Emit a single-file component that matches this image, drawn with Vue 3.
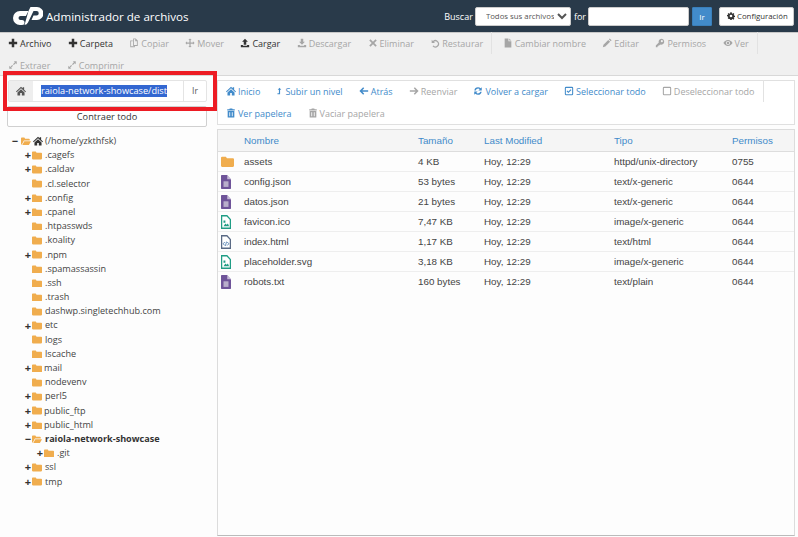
<template>
  <div class="page">
    <header class="top-bar">
      <div class="brand">
        <svg class="logo" viewBox="0 0 30 18">
          <path d="M7 4h8.500l-2.600 5H7.500a2 2 0 0 0 0 4H9a2.500 2.500 0 0 1 0 5H7a7 7 0 0 1 0-14z" />
          <path d="M15.500 4l2-4H24a6.500 6.500 0 0 1 0 13h-5.500l2-4.500h3a2.250 2.250 0 0 0 0-4.500h-3l-5.500 11.500a4 4 0 0 1-3.500 2.500z" />
        </svg>
        <span class="app-title">Administrador de archivos</span>
      </div>
      <div class="search">
        <label>Buscar</label>
        <select class="scope">
          <option>Todos sus archivos</option>
        </select>
        <label>for</label>
        <input class="search-input" type="text" />
        <button class="go">Ir</button>
        <button class="settings">
          <svg class="ico" viewBox="0 0 24 24"><path fill-rule="evenodd" :d="icons.gear" /></svg>
          Configuración
        </button>
      </div>
    </header>

    <!-- barra de acciones -->
    <div class="toolbar">
      <div v-for="(row, i) in actionRows" :key="i" class="tool-row">
        <span v-for="a in row" :key="a.label" class="action" :class="{ off: a.off, sep: a.sep }">
          <svg class="ico" viewBox="0 0 24 24"><path fill-rule="evenodd" :d="icons[a.icon]" /></svg>{{ a.label }}
        </span>
      </div>
    </div>

    <div class="main">
      <aside class="sidebar">
        <div class="path-bar">
          <span class="path-home"><svg class="ico" viewBox="0 0 24 24"><path :d="icons.home" /></svg></span>
          <div class="path-input"><span class="selected">raiola-network-showcase/dist</span></div>
          <span class="path-go">Ir</span>
        </div>
        <div class="red-box"></div>
        <button class="collapse">Contraer todo</button>

        <ul class="tree">
          <li class="root">
            <span class="toggle">−</span>
            <svg class="folder open" viewBox="0 0 24 20"><path :d="icons.folderOpen" /></svg>
            <svg class="ico house" viewBox="0 0 24 24"><path :d="icons.home" /></svg>
            <span>(/home/yzkthfsk)</span>
          </li>
          <li v-for="d in tree" :key="d.name" :class="{ nested: d.nested, current: d.current }">
            <span class="toggle">{{ d.mark }}</span>
            <svg class="folder" viewBox="0 0 24 20"><path :d="d.current ? icons.folderOpen : icons.folder" /></svg>
            <span class="name" :class="{ tight: d.tight }">{{ d.name }}</span>
          </li>
        </ul>
      </aside>

      <section class="content">
        <nav class="nav-box">
          <div v-for="(row, i) in navRows" :key="i" class="tool-row">
            <span v-for="n in row" :key="n.label" class="nav-item" :class="{ off: n.off, sep: n.sep }">
              <svg class="ico" :class="{ narrow: n.icon === 'levelUp' }" viewBox="0 0 24 24"><path fill-rule="evenodd" :d="icons[n.icon]" /></svg>{{ n.label }}
            </span>
          </div>
        </nav>

        <div class="table-box">
          <table class="files">
            <colgroup>
              <col class="c-icon" />
              <col class="c-name" />
              <col class="c-size" />
              <col class="c-date" />
              <col class="c-type" />
              <col />
            </colgroup>
            <thead>
              <tr>
                <th></th>
                <th>Nombre</th>
                <th>Tamaño</th>
                <th>Last Modified</th>
                <th>Tipo</th>
                <th>Permisos</th>
              </tr>
            </thead>
            <tbody>
              <tr v-for="f in files" :key="f.name">
                <td class="icon-cell">
                  <svg v-if="f.kind === 'dir'" class="file-ico dir" viewBox="0 0 24 20"><path :d="icons.folder" /></svg>
                  <svg v-else-if="f.kind === 'text'" class="file-ico text" viewBox="0 0 16 20" preserveAspectRatio="none">
                    <path d="M1 0h9l6 6v13a1 1 0 0 1-1 1H1a1 1 0 0 1-1-1V1a1 1 0 0 1 1-1z" />
                    <path class="corner" d="M10 0v6h6" />
                    <rect class="inner" x="4" y="9" width="8" height="8" />
                  </svg>
                  <svg v-else-if="f.kind === 'image'" class="file-ico image" viewBox="0 0 16 20" preserveAspectRatio="none">
                    <path class="outline" d="M1 1h8.500L15 6.500V19H1z" />
                    <path class="fillin" d="M4 8h3v3H4z M4 16l3-4 2 2 2-2 2 4z" />
                  </svg>
                  <svg v-else class="file-ico html" viewBox="0 0 16 20" preserveAspectRatio="none">
                    <path class="outline" d="M1 1h8.500L15 6.500V19H1z" />
                    <path class="code" d="M6 10l-2.500 2.500L6 15 M10 10l2.500 2.500L10 15 M8.800 9.500l-1.600 6" />
                  </svg>
                </td>
                <td>{{ f.name }}</td>
                <td>{{ f.size }}</td>
                <td>Hoy, 12:29</td>
                <td>{{ f.type }}</td>
                <td>{{ f.perm }}</td>
              </tr>
            </tbody>
          </table>
        </div>
      </section>
    </div>
  </div>
</template>

<script setup>
const icons = {
  plus: 'M9 2h6v7h7v6h-7v7H9v-7H2V9h7z',
  copy: 'M10 1h6l5 5v13H10z M12 3v14h7V8h-4V3z M3 6h6v2H5v12h7v-1h2v3H3z',
  move: 'M12 1l4 4h-2.500v5.500H19V8l4 4-4 4v-2.500h-5.500V19H16l-4 4-4-4h2.500v-5.500H5V16l-4-4 4-4v2.500h5.500V5H8z',
  upload: 'M12 2l7 7h-4v7H9V9H5z M2 17h5v1.500h10V17h5v5H2z',
  download: 'M9 2h6v7h4l-7 7-7-7h4z M2 17h5v1.500h10V17h5v5H2z',
  times: 'M6 3l6 6 6-6 3 3-6 6 6 6-3 3-6-6-6 6-3-3 6-6-6-6z',
  undo: 'M4 4l3 3a9 9 0 1 1-1 13l2.400-2a6 6 0 1 0 .7-8.800L12 12H4z',
  file: 'M4 1h9v7h7v15H4z M15 1l5 5h-5z',
  pencil: 'M2 22l1.500-6L15 4.500l4.500 4.500L8 20.500z M16.500 3l2-2L23 5.500l-2 2z',
  key: 'M15 2a7 7 0 1 1-2.500 13.500L10 18H8v2H6v2H2v-4l7-7A7 7 0 0 1 15 2z M16.500 5a2.500 2.500 0 1 0 0 5 2.500 2.500 0 0 0 0-5z',
  eye: 'M12 5c5 0 9 3.500 11 7-2 3.500-6 7-11 7S3 15.500 1 12c2-3.500 6-7 11-7z M12 7a5 5 0 1 0 0 10 5 5 0 0 0 0-10z M12 9a3 3 0 1 1 0 6 3 3 0 0 1 0-6z',
  expand: 'M14 3h7v7l-2.500-2.500L14 12l-2-2 4.500-4.500z M3 21v-7l2.500 2.500L10 12l2 2-4.500 4.500L10 21z',
  home: 'M12 2l4 3.600V3h3.500v5.800L24 13l-1.600 1.800L12 5.500 1.600 14.800 0 13z M12 8l8.500 7.500V23H14v-6h-4v6H3.500v-7.500z',
  levelUp: 'M12 1l6 7h-4v15H5v-3h5V8H6z',
  left: 'M10 3l2.500 2.500L8 10h14v4H8l4.500 4.500L10 21l-9-9z',
  right: 'M14 3l9 9-9 9-2.500-2.500L16 14H2v-4h14l-4.500-4.500z',
  refresh: 'M12 3a9 9 0 0 1 6.400 2.600L21 3v8h-8l3-3a5.500 5.500 0 0 0-9.300 2.500H3.200A9 9 0 0 1 12 3z M12 21a9 9 0 0 1-6.400-2.600L3 21v-8h8l-3 3a5.500 5.500 0 0 0 9.300-2.500h3.500A9 9 0 0 1 12 21z',
  check: 'M5 2h14a3 3 0 0 1 3 3v14a3 3 0 0 1-3 3H5a3 3 0 0 1-3-3V5a3 3 0 0 1 3-3z M5 4.500a.5.5 0 0 0-.5.500v14a.5.5 0 0 0 .5.500h14a.5.5 0 0 0 .5-.500V5a.5.5 0 0 0-.5-.500z M10.500 17L6 12.500 8 10.500l2.500 2.500L16 7.500l2 2z',
  square: 'M5 2h14a3 3 0 0 1 3 3v14a3 3 0 0 1-3 3H5a3 3 0 0 1-3-3V5a3 3 0 0 1 3-3z M5 4.500a.5.5 0 0 0-.5.500v14a.5.5 0 0 0 .5.500h14a.5.5 0 0 0 .5-.500V5a.5.5 0 0 0-.5-.500z',
  trash: 'M9 1h6l1 2h5v3H3V3h5z M4 7h16v15a1 1 0 0 1-1 1H5a1 1 0 0 1-1-1z M8 10v10h2V10z M14 10v10h2V10z',
  gear: 'M10 1h4l.6 3 2 .9L19.300 3l2.800 2.800-1.900 2.600.9 2.100 3 .5v4l-3 .5-.9 2.100 1.900 2.600-2.800 2.800-2.700-1.900-2 .9-.6 3h-4l-.6-3-2-.9L4.700 21 1.900 18.200l1.900-2.600-.9-2.100-3-.5v-4l3-.5.9-2.100L1.900 5.800 4.700 3l2.700 1.900 2-.9z M12 8a4 4 0 1 0 0 8 4 4 0 0 0 0-8z',
  folder: 'M2 1h7l2 3h11a2 2 0 0 1 2 2v12a2 2 0 0 1-2 2H2a2 2 0 0 1-2-2V3a2 2 0 0 1 2-2z',
  folderOpen: 'M2 1h6l2 3h9a2 2 0 0 1 2 2v2H7L2 18H1a1 1 0 0 1-1-1V3a2 2 0 0 1 2-2z M8 10h16l-5 9H3z'
}

const actionRows = [
  [
    { label: 'Archivo', icon: 'plus' },
    { label: 'Carpeta', icon: 'plus' },
    { label: 'Copiar', icon: 'copy', off: true },
    { label: 'Mover', icon: 'move', off: true },
    { label: 'Cargar', icon: 'upload' },
    { label: 'Descargar', icon: 'download', off: true },
    { label: 'Eliminar', icon: 'times', off: true },
    { label: 'Restaurar', icon: 'undo', off: true, sep: true },
    { label: 'Cambiar nombre', icon: 'file', off: true },
    { label: 'Editar', icon: 'pencil', off: true },
    { label: 'Permisos', icon: 'key', off: true },
    { label: 'Ver', icon: 'eye', off: true, sep: true }
  ],
  [
    { label: 'Extraer', icon: 'expand', off: true },
    { label: 'Comprimir', icon: 'expand', off: true }
  ]
]

const navRows = [
  [
    { label: 'Inicio', icon: 'home' },
    { label: 'Subir un nivel', icon: 'levelUp' },
    { label: 'Atrás', icon: 'left' },
    { label: 'Reenviar', icon: 'right', off: true },
    { label: 'Volver a cargar', icon: 'refresh' },
    { label: 'Seleccionar todo', icon: 'check' },
    { label: 'Deseleccionar todo', icon: 'square', off: true, sep: true }
  ],
  [
    { label: 'Ver papelera', icon: 'trash' },
    { label: 'Vaciar papelera', icon: 'trash', off: true }
  ]
]

const tree = [
  { name: '.cagefs', mark: '+' },
  { name: '.caldav', mark: '+' },
  { name: '.cl.selector' },
  { name: '.config', mark: '+' },
  { name: '.cpanel', mark: '+' },
  { name: '.htpasswds' },
  { name: '.koality' },
  { name: '.npm', mark: '+' },
  { name: '.spamassassin' },
  { name: '.ssh' },
  { name: '.trash' },
  { name: 'dashwp.singletechhub.com' },
  { name: 'etc', mark: '+' },
  { name: 'logs' },
  { name: 'lscache' },
  { name: 'mail', mark: '+', tight: true },
  { name: 'nodevenv' },
  { name: 'perl5', mark: '+' },
  { name: 'public_ftp', mark: '+', tight: true },
  { name: 'public_html', mark: '+', tight: true },
  { name: 'raiola-network-showcase', mark: '−', current: true },
  { name: '.git', mark: '+', nested: true },
  { name: 'ssl', mark: '+' },
  { name: 'tmp', mark: '+' }
]

const files = [
  { name: 'assets', size: '4 KB', type: 'httpd/unix-directory', perm: '0755', kind: 'dir' },
  { name: 'config.json', size: '53 bytes', type: 'text/x-generic', perm: '0644', kind: 'text' },
  { name: 'datos.json', size: '21 bytes', type: 'text/x-generic', perm: '0644', kind: 'text' },
  { name: 'favicon.ico', size: '7,47 KB', type: 'image/x-generic', perm: '0644', kind: 'image' },
  { name: 'index.html', size: '1,17 KB', type: 'text/html', perm: '0644', kind: 'html' },
  { name: 'placeholder.svg', size: '3,18 KB', type: 'image/x-generic', perm: '0644', kind: 'image' },
  { name: 'robots.txt', size: '160 bytes', type: 'text/plain', perm: '0644', kind: 'text' }
]
</script>

<style>
html, body {
  margin: 0;
  background: #fff;
}
</style>

<style scoped>
.page {
  width: 798px;
  height: 537px;
  overflow: hidden;
  font-family: "Open Sans", "Noto Sans", sans-serif;
  font-size: 9.1px;
  color: #333;
  background: #fdfdfd;
}
.ico {
  width: 10px;
  height: 10px;
  fill: currentColor;
  flex: none;
}
.ico.narrow {
  width: 7px;
}

/* cabecera */
.top-bar {
  height: 32px;
  box-sizing: border-box;
  background: #293a4a;
  display: flex;
  align-items: center;
  justify-content: space-between;
  padding: 0 4px 0 13px;
  color: #fff;
}
.brand {
  display: flex;
  align-items: center;
  gap: 3px;
}
.logo {
  width: 30px;
  height: 18px;
  fill: #fff;
}
.app-title {
  font-size: 11.6px;
}
.search {
  display: flex;
  align-items: center;
  font-size: 9px;
}
.scope {
  width: 96px;
  height: 19px;
  margin: 0 3px 0 2px;
  padding: 0 0 0 6px;
  background: #fff;
  border: 1px solid #ccc;
  border-radius: 2px;
  font-family: "Open Sans", sans-serif;
  font-size: 7.8px;
  color: #555;
}
.search-input {
  width: 101px;
  height: 19px;
  box-sizing: border-box;
  margin-left: 2px;
  border: 1px solid #ccc;
  border-radius: 2px;
  background: #fff;
}
.go {
  width: 20px;
  height: 19px;
  margin-left: 3px;
  padding: 0;
  background: #428bca;
  border: 1px solid #3a7fba;
  border-radius: 1px;
  color: #fff;
  font-family: inherit;
  font-size: 8px;
}
.settings {
  display: flex;
  align-items: center;
  gap: 2px;
  width: 75px;
  height: 19px;
  margin-left: 7px;
  padding: 0 0 0 7px;
  box-sizing: border-box;
  background: #fff;
  border: 1px solid #ccc;
  border-radius: 2px;
  color: #333;
  font-family: inherit;
  font-size: 7.8px;
  white-space: nowrap;
}
.settings .ico {
  width: 8px;
  height: 8px;
}

/* barra de acciones */
.toolbar {
  height: 44px;
  box-sizing: border-box;
  padding-left: 8px;
  background: #f0f0f0;
  border-top: 1px solid #c8c8c8;
  border-bottom: 1px solid #d8d8d8;
}
.tool-row {
  display: flex;
  height: 22px;
  column-gap: 16.4px;
}
.nav-box .tool-row {
  column-gap: 16.1px;
}
.toolbar .tool-row:first-child,
.nav-box .tool-row:first-child {
  margin-top: -1px;
}
.action,
.nav-item {
  display: flex;
  align-items: center;
  gap: 2px;
  font-size: 9px;
  white-space: nowrap;
}
.action {
  color: #333;
}
.nav-item {
  color: #428bca;
}
.action.off,
.nav-item.off {
  color: #a6a6a6;
}
.sep {
  margin-right: -6px;
  padding-right: 8px;
  border-right: 1px solid #e2e2e2;
}

.main {
  display: flex;
  align-items: flex-start;
}

/* panel izquierdo */
.sidebar {
  position: relative;
  width: 217px;
  flex: none;
  box-sizing: border-box;
  padding: 4px 10px 0 7px;
}
.path-bar {
  display: flex;
  height: 22px;
  margin-left: 1px;
  border: 1px solid #e4e4e4;
  border-radius: 2px;
  box-sizing: border-box;
  background: #fff;
}
.path-home {
  width: 24px;
  display: flex;
  align-items: center;
  justify-content: center;
  background: #eee;
  color: #555;
}
.path-input {
  flex: 1;
  padding-left: 8px;
  display: flex;
  align-items: center;
  font-size: 9.2px;
  border-right: 1px solid #e4e4e4;
  white-space: nowrap;
  overflow: hidden;
}
.selected {
  background: #3367d1;
  color: #fff;
  line-height: 12px;
}
.path-go {
  width: 22px;
  flex: none;
  text-align: center;
  line-height: 20px;
  color: #555;
  font-size: 8.5px;
}
.red-box {
  position: absolute;
  left: 3px;
  top: -5px;
  width: 214px;
  height: 40px;
  box-sizing: border-box;
  border: 4px solid #ed1c24;
  pointer-events: none;
}
.collapse {
  display: block;
  width: 200px;
  height: 21px;
  margin-top: 4px;
  padding: 0;
  background: #fff;
  border: 1px solid #d0d0d0;
  border-radius: 2px;
  color: #333;
  font-family: inherit;
  font-size: 9.2px;
}
.tree {
  list-style: none;
  margin: 7px 0 0;
  padding: 0;
}
.tree li {
  position: relative;
  height: 14.2px;
  line-height: 14.2px;
  display: flex;
  align-items: center;
  padding-left: 25px;
  white-space: nowrap;
  color: #444;
}
.tree li.root {
  padding-left: 14px;
}
.tree li.nested {
  padding-left: 37px;
}
.tree li.current {
  font-weight: 700;
  color: #333;
}
.toggle {
  position: absolute;
  left: 17px;
  width: 8px;
  text-align: center;
  font-weight: 700;
  font-size: 11px;
  line-height: 10px;
  color: #333;
}
.root .toggle {
  left: 4px;
}
.nested .toggle {
  left: 29px;
}
.folder {
  width: 10px;
  height: 8.5px;
  fill: #f0ad4e;
  flex: none;
  margin-right: 3px;
}
.root .folder {
  margin-right: 2px;
}
.house {
  margin-right: 2px;
  color: #333;
}
.name.tight {
  margin-left: -1px;
}

/* panel derecho */
.content {
  width: 578px;
  flex: none;
}
.nav-box {
  height: 45px;
  margin-top: 4px;
  box-sizing: border-box;
  padding-left: 8px;
  border: 1px solid #e0e0e0;
  background: #fff;
}
.table-box {
  height: 407px;
  box-sizing: border-box;
  margin-top: 4px;
  border: 1px solid #dcdcdc;
  border-bottom-color: #bbb;
}
.files {
  width: 100%;
  border-collapse: collapse;
  table-layout: fixed;
  font-family: "Liberation Sans", Arial, sans-serif;
  font-size: 9.8px;
  color: #444;
}
.c-icon { width: 26px; }
.c-name { width: 174px; }
.c-size { width: 66px; }
.c-date { width: 130px; }
.c-type { width: 118px; }
.files th {
  height: 21px;
  padding: 0;
  text-align: left;
  font-weight: 400;
  color: #428bca;
  background: #f5f5f5;
  border-bottom: 1px solid #ddd;
}
.files td {
  height: 19px;
  padding: 0;
  border-bottom: 1px solid #eee;
}
.files tr:last-child td {
  border-bottom: 0;
}
.icon-cell {
  line-height: 0;
}
.file-ico {
  height: 14px;
  width: 10px;
  margin-left: 3px;
}
.file-ico.dir {
  width: 13px;
  height: 11px;
  fill: #f0ad4e;
}
.file-ico.text {
  fill: #6f5499;
}
.file-ico .corner {
  fill: #fff;
  opacity: .6;
}
.file-ico .inner {
  fill: #b9aecb;
}
.file-ico .outline {
  fill: #fff;
  stroke-width: 2;
}
.file-ico.image .outline {
  stroke: #1f9d85;
}
.file-ico .fillin {
  fill: #1f9d85;
}
.file-ico.html .outline {
  stroke: #5a6a85;
}
.file-ico .code {
  fill: none;
  stroke: #3a6ea5;
  stroke-width: 1.2;
}
</style>
